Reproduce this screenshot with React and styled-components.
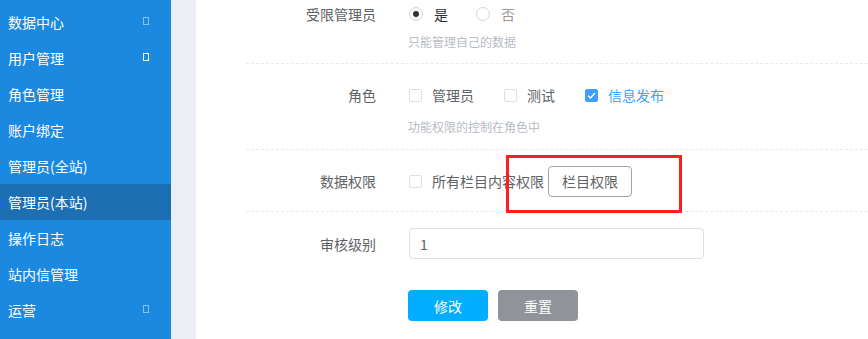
import React from 'react';
import styled, { createGlobalStyle } from 'styled-components';

const GlobalStyle = createGlobalStyle`
  body {
    margin: 0;
    font-family: "Noto Sans CJK SC", "Liberation Sans", sans-serif;
    font-size: 14px;
    background: #fff;
  }
`;

const menu = [
  { text: '数据中心', icon: 'dim' },
  { text: '用户管理', icon: 'bright' },
  { text: '角色管理' },
  { text: '账户绑定' },
  { text: '管理员(全站)' },
  { text: '管理员(本站)', active: true },
  { text: '操作日志' },
  { text: '站内信管理' },
  { text: '运营', icon: 'dim' },
];

export default function App() {
  return (
    <Page>
      <GlobalStyle />
      <Sidebar>
        {menu.map(item => (
          <MenuItem key={item.text} $active={item.active}>
            {item.text}
            {item.icon && <Tofu $bright={item.icon === 'bright'} />}
          </MenuItem>
        ))}
      </Sidebar>
      <Gutter />
      <Main>
        <Section $pt={0} $pb={13} $dashed>
          <Row>
            <Label>受限管理员</Label>
            <Control>
              <Radio $checked>
                <RadioDot $checked />
                是
              </Radio>
              <Radio>
                <RadioDot />
                否
              </Radio>
            </Control>
          </Row>
          <Help $mt={6}>只能管理自己的数据</Help>
        </Section>

        <Section $pt={17} $pb={14} $dashed>
          <Row>
            <Label>角色</Label>
            <Control>
              <Check>
                <Box />
                管理员
              </Check>
              <Check>
                <Box />
                测试
              </Check>
              <Check $checked>
                <Box $checked>
                  <svg width="9" height="7" viewBox="0 0 9 7">
                    <path d="M1 3.6 L3.4 6 L8 1" fill="none" stroke="#fff" strokeWidth="1.3" />
                  </svg>
                </Box>
                信息发布
              </Check>
            </Control>
          </Row>
          <Help $mt={10}>功能权限的控制在角色中</Help>
        </Section>

        <Section $pt={15} $pb={14} $dashed>
          <Row $h={32}>
            <Label>数据权限</Label>
            <Control>
              <Check $tight>
                <Box />
                所有栏目内容权限
              </Check>
              <OutlineButton>栏目权限</OutlineButton>
            </Control>
          </Row>
        </Section>

        <Section $pt={16} $pb={0}>
          <Row $h={31}>
            <Label>审核级别</Label>
            <Control>
              <Input defaultValue="1" />
            </Control>
          </Row>
          <Actions>
            <SolidButton $bg="#03adff">修改</SolidButton>
            <SolidButton $bg="#909399">重置</SolidButton>
          </Actions>
        </Section>
      </Main>
      <Highlight />
    </Page>
  );
}

const Page = styled.div`
  position: relative;
  display: flex;
  height: 339px;
  overflow: hidden;
`;

const Sidebar = styled.nav`
  width: 171px;
  flex-shrink: 0;
  background: #1b89e0;
  padding-top: 4px;
`;

const MenuItem = styled.div`
  position: relative;
  height: 36px;
  line-height: 36px;
  padding-left: 8px;
  color: #fff;
  font-size: 14px;
  background: ${props => (props.$active ? '#1d6fb4' : 'transparent')};
`;

const Tofu = styled.span`
  position: absolute;
  left: 143px;
  top: 13px;
  width: 4px;
  height: 6px;
  border: 1px solid ${props => (props.$bright ? '#ffffff' : '#7ec4f6')};
`;

const Gutter = styled.div`
  width: 25px;
  flex-shrink: 0;
  background: #ebeef4;
`;

const Main = styled.main`
  flex: 1;
  padding-left: 50px;
`;

const Section = styled.section`
  padding-top: ${props => props.$pt}px;
  padding-bottom: ${props => props.$pb}px;
  border-bottom: 1px ${props => (props.$dashed ? 'dashed #e8eaee' : 'none')};
`;

const Row = styled.div`
  display: flex;
  align-items: center;
  height: ${props => props.$h || 28}px;
`;

const Label = styled.div`
  width: 130px;
  padding-right: 33px;
  text-align: right;
  color: #606266;
  font-size: 14px;
`;

const Control = styled.div`
  display: flex;
  align-items: center;
`;

const Radio = styled.label`
  display: flex;
  align-items: center;
  margin-right: 28px;
  color: ${props => (props.$checked ? '#303133' : '#9a9a9a')};
`;

const RadioDot = styled.span`
  box-sizing: border-box;
  width: 14px;
  height: 14px;
  margin-right: 11px;
  border-radius: 50%;
  border: 1px solid #d4d6da;
  display: flex;
  align-items: center;
  justify-content: center;

  &::after {
    content: '';
    display: ${props => (props.$checked ? 'block' : 'none')};
    width: 6px;
    height: 6px;
    border-radius: 50%;
    background: #333;
  }
`;

const Help = styled.div`
  margin-top: ${props => props.$mt}px;
  padding-left: 162px;
  line-height: 16px;
  font-size: 12px;
  color: #b8bcc4;
`;

const Check = styled.label`
  display: flex;
  align-items: center;
  margin-right: ${props => (props.$tight ? 4 : 30)}px;
  color: ${props => (props.$checked ? '#409eff' : '#606266')};
`;

const Box = styled.span`
  box-sizing: border-box;
  width: 13px;
  height: 13px;
  margin-right: 10px;
  border-radius: 2px;
  border: 1px solid ${props => (props.$checked ? '#409eff' : '#dcdfe6')};
  background: ${props => (props.$checked ? '#409eff' : '#fff')};
  display: flex;
  align-items: center;
  justify-content: center;
`;

const OutlineButton = styled.button`
  box-sizing: border-box;
  height: 31px;
  width: 84px;
  border: 1px solid #a3a3a3;
  border-radius: 4px;
  background: #fff;
  color: #606266;
  font-family: inherit;
  font-size: 14px;
  padding: 0;
`;

const Input = styled.input`
  box-sizing: border-box;
  width: 295px;
  height: 31px;
  border: 1px solid #dcdfe6;
  border-radius: 4px;
  padding: 0 10px;
  color: #606266;
  font-family: inherit;
  font-size: 14px;
  outline: none;
`;

const Actions = styled.div`
  display: flex;
  gap: 10px;
  margin-top: 31px;
  padding-left: 162px;
`;

const SolidButton = styled.button`
  width: 80px;
  height: 31px;
  border: none;
  border-radius: 4px;
  background: ${props => props.$bg};
  color: #fff;
  font-family: inherit;
  font-size: 14px;
  padding: 0;
`;

const Highlight = styled.div`
  position: absolute;
  left: 506px;
  top: 155px;
  width: 176px;
  height: 58px;
  box-sizing: border-box;
  border: 3px solid #ff1d1d;
  pointer-events: none;
`;
